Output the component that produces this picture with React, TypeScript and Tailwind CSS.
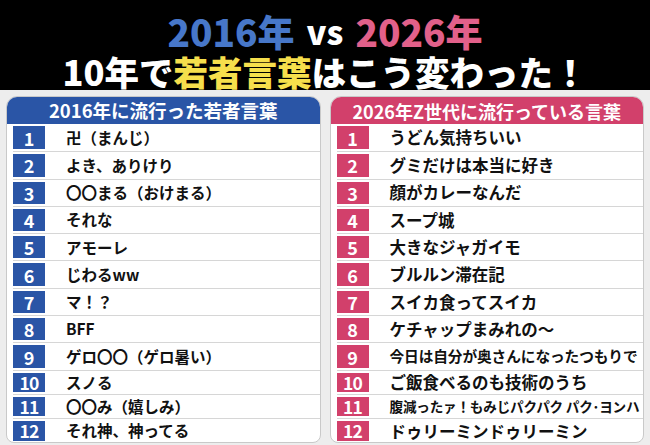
import React from "react";

const FONT = { fontFamily: '"Noto Sans CJK JP", "Noto Sans", sans-serif' };

type Row = { text: string; size?: string };

const left: Row[] = [
  { text: "卍（まんじ）" },
  { text: "よき、ありけり" },
  { text: "〇〇まる（おけまる）" },
  { text: "それな" },
  { text: "アモーレ" },
  { text: "じわるww" },
  { text: "マ！？" },
  { text: "BFF" },
  { text: "ゲロ〇〇（ゲロ暑い）" },
  { text: "スノる" },
  { text: "〇〇み（嬉しみ）" },
  { text: "それ神、神ってる" },
];

const right: Row[] = [
  { text: "うどん気持ちいい" },
  { text: "グミだけは本当に好き" },
  { text: "顔がカレーなんだ" },
  { text: "スープ城" },
  { text: "大きなジャガイモ" },
  { text: "ブルルン滞在記" },
  { text: "スイカ食ってスイカ" },
  { text: "ケチャップまみれの〜" },
  { text: "今日は自分が奥さんになったつもりで", size: "text-[14.7px] tracking-[-0.1px]" },
  { text: "ご飯食べるのも技術のうち" },
  { text: "腹減ったァ！もみじパクパク パク･ヨンハ", size: "text-[13.6px] tracking-[-0.2px]" },
  { text: "ドゥリーミンドゥリーミン" },
];

function Panel({
  title,
  rows,
  color,
  textSize,
  titleSize,
}: {
  title: string;
  rows: Row[];
  color: string;
  textSize: string;
  titleSize: string;
}) {
  return (
    <div className="flex h-[347px] flex-col overflow-hidden rounded-t-[11px] rounded-b-[8px] border border-[#c9c9c9] bg-white">
      <div
        className={`flex h-[27px] shrink-0 items-center justify-center font-bold leading-none text-white ${titleSize} ${color}`}
      >
        {title}
      </div>
      <div className="flex flex-col pl-[6px]">
        {rows.map((r, i) => (
          <div
            key={i}
            className={`flex items-stretch ${i < 9 ? "h-[27.3px]" : "h-[24.3px]"} ${
              i > 0 ? "border-t border-[#d6d6d6]" : ""
            }`}
          >
            <div
              className={`my-[2px] flex w-[32px] shrink-0 items-center justify-center font-bold leading-none text-white ${color} ${
                i < 9 ? "text-[18px]" : "text-[17.5px] tracking-[-0.8px]"
              }`}
            >
              {i + 1}
            </div>
            <div
              className={`ml-[21px] flex items-center whitespace-nowrap font-bold leading-none text-[#111] ${
                r.size ?? textSize
              }`}
            >
              {r.text}
            </div>
          </div>
        ))}
      </div>
    </div>
  );
}

export default function App() {
  return (
    <div className="h-[445px] w-[650px] overflow-hidden bg-[#ededed]" style={FONT}>
      <div className="flex h-[90px] flex-col items-center bg-black pt-[11px] font-black">
        <div className="flex h-[40px] items-center text-[37px] leading-[40px]">
          <span className="text-[#4777c9]">2016年</span>
          <span className="mx-[12px] text-[33px] text-white">vs</span>
          <span className="text-[#e2608a]">2026年</span>
        </div>
        <div className="flex h-[40px] items-center text-[34.5px] leading-[40px] text-white">
          10年で<span className="text-[#f6df4c]">若者言葉</span>はこう変わった！
        </div>
      </div>
      <div className="grid grid-cols-2 gap-[9px] px-[6px] pt-[6px]">
        <Panel
          title="2016年に流行った若者言葉"
          rows={left}
          color="bg-[#2a55a6]"
          textSize="text-[15.5px]"
          titleSize="text-[18.5px]"
        />
        <Panel
          title="2026年Z世代に流行っている言葉"
          rows={right}
          color="bg-[#d2406b]"
          textSize="text-[16.5px]"
          titleSize="text-[18px]"
        />
      </div>
    </div>
  );
}
